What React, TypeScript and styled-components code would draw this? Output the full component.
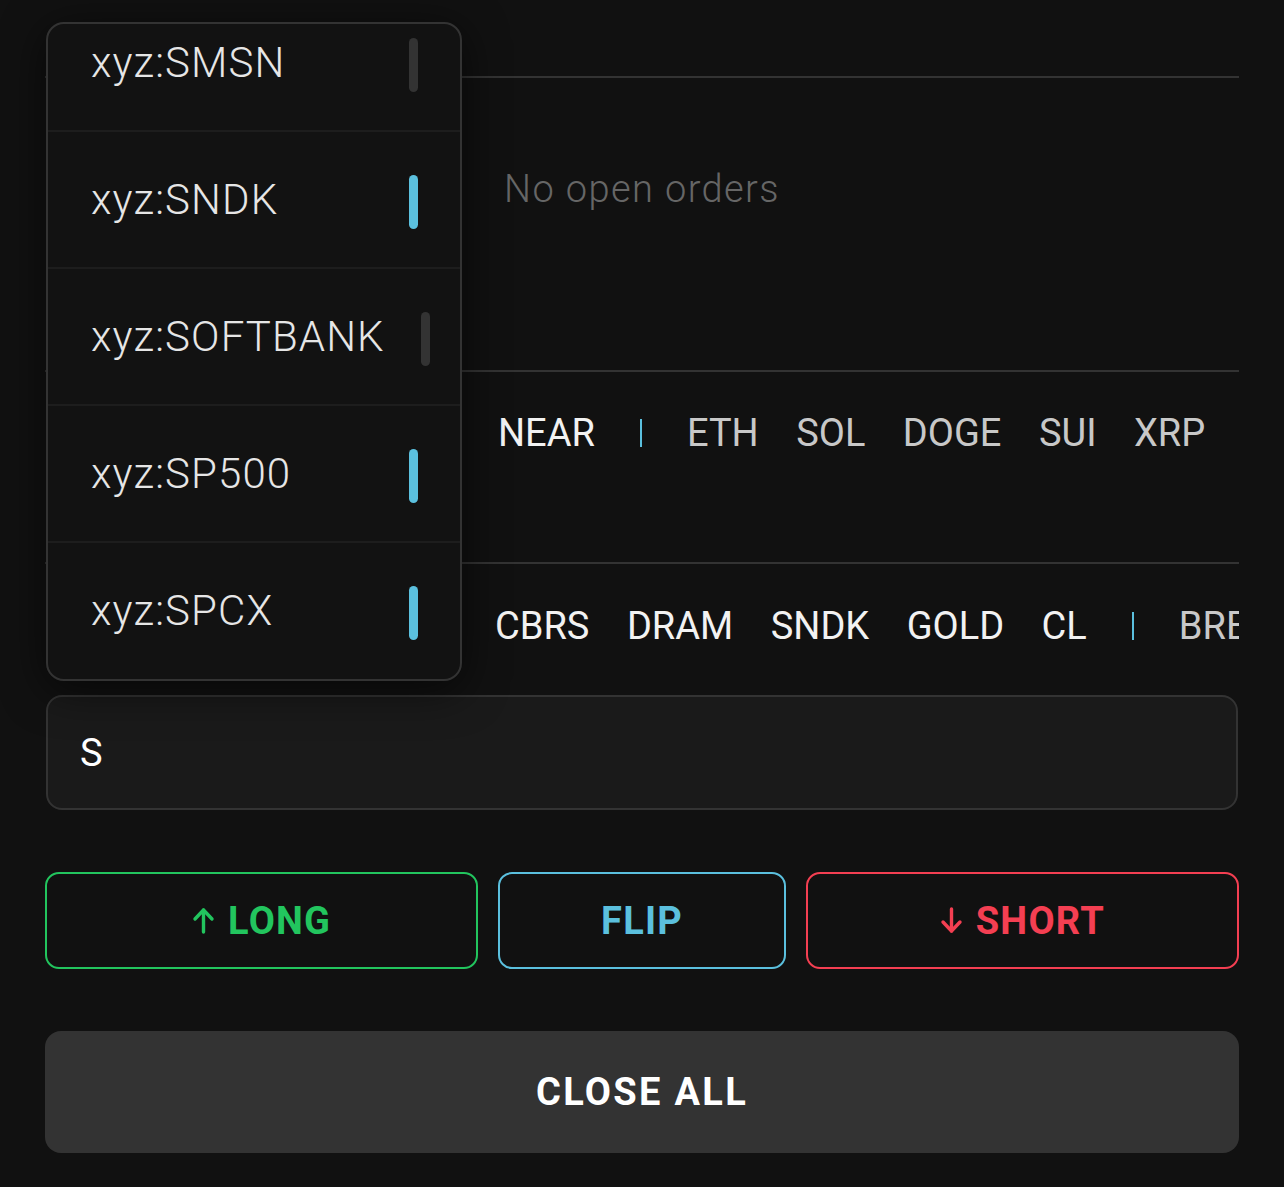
import styled, { createGlobalStyle } from "styled-components";

const GlobalStyle = createGlobalStyle`
  html, body {
    margin: 0;
    background: #111111;
  }
  body {
    font-family: Roboto, "Noto Sans", sans-serif;
    -webkit-font-smoothing: antialiased;
  }
`;

const CYAN = "#5bc0de";
const GREEN = "#22c55e";
const RED = "#f43f52";

const Page = styled.div`
  min-height: 1187px;
  box-sizing: border-box;
  padding: 0 45px;
  background: #111111;
  overflow: hidden;
`;

const Board = styled.div`
  position: relative;
  height: 681px;
`;

const Band = styled.section<{ $height: number; $ruled?: boolean }>`
  box-sizing: border-box;
  height: ${(p) => p.$height}px;
  border-bottom: ${(p) => (p.$ruled ? "2px solid #333333" : "none")};
`;

const Empty = styled.div`
  padding-top: 88px;
  text-align: center;
  font-size: 38px;
  line-height: 46px;
  font-weight: 300;
  letter-spacing: 1.4px;
  color: #666666;
`;

const ChipRow = styled.div<{ $lead: number; $top: number }>`
  display: flex;
  align-items: center;
  gap: 37.5px;
  padding: ${(p) => p.$top}px 0 0 ${(p) => p.$lead}px;
  white-space: nowrap;
  overflow: hidden;
`;

const Chip = styled.span<{ $pinned?: boolean }>`
  flex-shrink: 0;
  font-size: 38px;
  line-height: 46px;
  color: ${(p) => (p.$pinned ? "#f2f2f2" : "#c8c8c8")};
`;

const Divider = styled.span`
  flex-shrink: 0;
  width: 2px;
  height: 28px;
  margin: 0 7px 0 8px;
  background: ${CYAN};
`;

const Dropdown = styled.div`
  position: absolute;
  top: 22px;
  left: 1px;
  width: 416px;
  height: 659px;
  box-sizing: border-box;
  border: 2px solid #333333;
  border-radius: 18px;
  background: #121212;
  overflow: hidden;
  box-shadow: 0 8px 44px rgba(0, 0, 0, 0.6);
`;

const OptionList = styled.ul`
  list-style: none;
  margin: -29px 0 0;
  padding: 0;
`;

const Option = styled.li`
  display: flex;
  align-items: center;
  gap: 36px;
  height: 135px;
  padding: 0 42px 0 43px;
  border-bottom: 2px solid #1d1d1d;

  &:last-child {
    border-bottom: none;
  }
`;

const OptionName = styled.span`
  flex-shrink: 0;
  font-size: 42px;
  font-weight: 300;
  letter-spacing: 1.1px;
  color: #e6e6e6;
`;

const Marker = styled.span<{ $on: boolean }>`
  flex-shrink: 0;
  margin-left: auto;
  width: 9px;
  height: 54px;
  margin-top: 4px;
  border-radius: 5px;
  background: ${(p) => (p.$on ? CYAN : "#333333")};
`;

const Search = styled.input`
  display: block;
  box-sizing: border-box;
  width: calc(100% - 2px);
  height: 115px;
  margin: 14px 1px 0;
  padding: 0 32px;
  border: 2px solid #333333;
  border-radius: 16px;
  background: #1a1a1a;
  color: #ffffff;
  font-family: Roboto, sans-serif;
  font-size: 38px;
  outline: none;
`;

const Actions = styled.div`
  display: flex;
  gap: 20px;
  margin-top: 62px;
`;

const TradeButton = styled.button<{ $tone: string; $grow: number }>`
  flex: ${(p) => p.$grow} 1 0;
  box-sizing: border-box;
  display: flex;
  align-items: center;
  justify-content: center;
  gap: 13px;
  height: 97px;
  padding: 0;
  border: 2.5px solid ${(p) => p.$tone};
  border-radius: 14px;
  background: transparent;
  color: ${(p) => p.$tone};
  font-family: Roboto, sans-serif;
  font-size: 38px;
  font-weight: 700;
  letter-spacing: 1.2px;
`;

const CloseAll = styled.button`
  display: block;
  width: 100%;
  height: 122px;
  margin-top: 62px;
  border: none;
  border-radius: 16px;
  background: #333333;
  color: #ffffff;
  font-family: Roboto, sans-serif;
  font-size: 38px;
  font-weight: 700;
  letter-spacing: 2.3px;
`;

function Arrow({ down }: { down?: boolean }) {
  return (
    <svg width="23" height="27" viewBox="0 0 23 27" fill="none">
      <g
        stroke="currentColor"
        strokeWidth="3.4"
        strokeLinecap="round"
        strokeLinejoin="round"
        transform={down ? "rotate(180 11.5 13.5)" : undefined}
      >
        <path d="M3 12 L11.5 3 L20 12" />
        <path d="M11.5 3 V25" />
      </g>
    </svg>
  );
}

const markets = [
  { name: "xyz:SMSN", on: false },
  { name: "xyz:SNDK", on: true },
  { name: "xyz:SOFTBANK", on: false },
  { name: "xyz:SP500", on: true },
  { name: "xyz:SPCX", on: true },
];

const cryptoPinned = ["NEAR"];
const cryptoRest = ["ETH", "SOL", "DOGE", "SUI", "XRP"];
const tradfiPinned = ["CBRS", "DRAM", "SNDK", "GOLD", "CL"];
const tradfiRest = ["BRENT", "SILVER"];

export default function App() {
  return (
    <>
      <GlobalStyle />
      <Page>
        <Board>
          <Band $height={78} $ruled />
          <Band $height={294} $ruled>
            <Empty>No open orders</Empty>
          </Band>
          <Band $height={192} $ruled>
            <ChipRow $lead={453} $top={38}>
              {cryptoPinned.map((c) => (
                <Chip key={c} $pinned>
                  {c}
                </Chip>
              ))}
              <Divider />
              {cryptoRest.map((c) => (
                <Chip key={c}>{c}</Chip>
              ))}
            </ChipRow>
          </Band>
          <Band $height={117}>
            <ChipRow $lead={450} $top={39}>
              {tradfiPinned.map((c) => (
                <Chip key={c} $pinned>
                  {c}
                </Chip>
              ))}
              <Divider />
              {tradfiRest.map((c) => (
                <Chip key={c}>{c}</Chip>
              ))}
            </ChipRow>
          </Band>

          <Dropdown>
            <OptionList>
              {markets.map((m) => (
                <Option key={m.name}>
                  <OptionName>{m.name}</OptionName>
                  <Marker $on={m.on} />
                </Option>
              ))}
            </OptionList>
          </Dropdown>
        </Board>

        <Search readOnly defaultValue="S" />

        <Actions>
          <TradeButton $tone={GREEN} $grow={433}>
            <Arrow />
            LONG
          </TradeButton>
          <TradeButton $tone={CYAN} $grow={286}>
            FLIP
          </TradeButton>
          <TradeButton $tone={RED} $grow={433}>
            <Arrow down />
            SHORT
          </TradeButton>
        </Actions>

        <CloseAll>CLOSE ALL</CloseAll>
      </Page>
    </>
  );
}
